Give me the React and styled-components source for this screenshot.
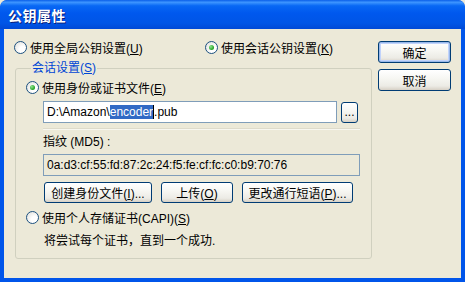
import React from 'react'
import styled, { createGlobalStyle, css } from 'styled-components'

const Global = createGlobalStyle`
  html, body { margin: 0; padding: 0; background: #ece9d8; }
  body { font-family: "Liberation Sans", "Noto Sans CJK SC", sans-serif; font-size: 12px; color: #000; }
`

const Window = styled.div`
  width: 465px;
  height: 282px;
  box-sizing: border-box;
  background: #0055ea;
  border-radius: 7px 7px 0 0;
  display: flex;
  flex-direction: column;
  padding: 0 4px 4px 4px;
  overflow: hidden;
`

const TitleBar = styled.div`
  height: 29px;
  margin: 0 -4px;
  padding-left: 8px;
  display: flex;
  align-items: center;
  background: linear-gradient(#0a5fe9 0%, #3d95ff 8%, #0868f4 20%, #0058ee 45%, #0055e6 80%, #0049d6 100%);
  border-radius: 7px 7px 0 0;
`

const Title = styled.span`
  color: #fff;
  font-weight: bold;
  font-size: 14px;
  letter-spacing: 0.5px;
  text-shadow: 1px 1px 0 #0a1e7a;
`

const Body = styled.div`
  flex: 1;
  background: #ece9d8;
  display: flex;
  padding: 9px 0 0 10px;
`

const LeftCol = styled.div`
  width: 358px;
  display: flex;
  flex-direction: column;
`

const RightCol = styled.div`
  margin-left: 6px;
  padding-top: 3px;
  display: flex;
  flex-direction: column;
  gap: 6px;
`

const Row = styled.div`
  display: flex;
  align-items: center;
  height: ${p => p.$h || 18}px;
  margin-top: ${p => p.$mt || 0}px;
  padding-left: ${p => p.$indent || 0}px;
  gap: ${p => p.$gap || 0}px;
`

const RadioLabel = styled.label`
  display: flex;
  align-items: center;
  gap: 3px;
  width: ${p => p.$w ? p.$w + 'px' : 'auto'};
  white-space: nowrap;
`

const Circle = styled.span`
  width: 13px;
  height: 13px;
  box-sizing: border-box;
  border-radius: 50%;
  border: 1px solid #1c5180;
  background: radial-gradient(circle at 70% 70%, #ffffff 30%, #dcdcd7 100%);
  display: flex;
  align-items: center;
  justify-content: center;
  ${p => p.$on && css`
    &::after {
      content: '';
      width: 5px;
      height: 5px;
      border-radius: 50%;
      background: radial-gradient(circle at 35% 35%, #8fe48f, #21a121 70%);
    }
  `}
`

const Fieldset = styled.fieldset`
  margin: 4px 0 0 1px;
  width: 357px;
  box-sizing: border-box;
  border: 1px solid #d0d0bf;
  border-radius: 3px;
  padding: 2px 10px 11px 10px;
  display: flex;
  flex-direction: column;
`

const Legend = styled.legend`
  color: #0046d5;
  padding: 0 1px;
  margin-left: 5px;
  line-height: 16px;
`

const Indented = styled.div`
  padding-left: 17px;
  display: flex;
  flex-direction: column;
`

const TextBox = styled.div`
  height: 22px;
  box-sizing: border-box;
  border: 1px solid #7f9db9;
  background: ${p => (p.$readOnly ? '#ece9d8' : '#fff')};
  width: ${p => p.$w}px;
  display: flex;
  align-items: center;
  padding-left: 3px;
  white-space: nowrap;
`

const Sel = styled.span`
  background: #316ac5;
  color: #fff;
`

const Caret = styled.span`
  display: inline-block;
  width: 1px;
  height: 14px;
  background: #000;
  vertical-align: middle;
`

const Separator = styled.div`
  height: 1px;
  margin-top: 5px;
  width: 317px;
  background: #dedbcb;
  border-bottom: 1px solid #f8f7f0;
`

const Button = styled.button`
  font: inherit;
  color: #000;
  height: ${p => p.$h || 21}px;
  width: ${p => p.$w}px;
  box-sizing: border-box;
  padding: 0;
  border: 1px solid #003c74;
  border-radius: 3px;
  background: linear-gradient(#ffffff 0%, #f7f7f3 40%, #ecebe5 80%, #d6d0c5 100%);
  white-space: nowrap;
  ${p => p.$default && css`
    box-shadow: inset 0 0 0 1px #98b8ea, inset 0 0 0 2px #c1d3fb;
  `}
`

const Hint = styled.div`
  height: 16px;
  display: flex;
  align-items: center;
  margin-top: 5px;
  padding-left: 18px;
`

function Radio({ on, children, w }) {
  return (
    <RadioLabel $w={w}>
      <Circle $on={on} />
      <span>{children}</span>
    </RadioLabel>
  )
}

export default function App() {
  return (
    <>
      <Global />
      <Window>
        <TitleBar>
          <Title>公钥属性</Title>
        </TitleBar>
        <Body>
          <LeftCol>
            <Row>
              <Radio w={191}>使用全局公钥设置(<u>U</u>)</Radio>
              <Radio on>使用会话公钥设置(<u>K</u>)</Radio>
            </Row>
            <Fieldset>
              <Legend>会话设置(<u>S</u>)</Legend>
              <Row>
                <Radio on>使用身份或证书文件(<u>E</u>)</Radio>
              </Row>
              <Indented>
                <Row $h={22} $mt={5} $gap={4}>
                  <TextBox $w={294}>
                    D:\Amazon\<Sel>encoder</Sel><Caret />.pub
                  </TextBox>
                  <Button $w={17} $h={21}>...</Button>
                </Row>
                <Separator />
                <Row $h={16} $mt={2}>指纹 (MD5) :</Row>
                <Row $h={22} $mt={6}>
                  <TextBox $w={317} $readOnly>
                    0a:d3:cf:55:fd:87:2c:24:f5:fe:cf:fc:c0:b9:70:76
                  </TextBox>
                </Row>
                <Row $h={21} $mt={6} $gap={9} $indent={1}>
                  <Button $w={108}>创建身份文件(<u>I</u>)...</Button>
                  <Button $w={72}>上传(<u>O</u>)</Button>
                  <Button $w={111}>更改通行短语(<u>P</u>)...</Button>
                </Row>
              </Indented>
              <Row $mt={5}>
                <Radio>使用个人存储证书(CAPI)(<u>S</u>)</Radio>
              </Row>
              <Hint>将尝试每个证书，直到一个成功.</Hint>
            </Fieldset>
          </LeftCol>
          <RightCol>
            <Button $w={73} $h={22} $default>确定</Button>
            <Button $w={73} $h={22}>取消</Button>
          </RightCol>
        </Body>
      </Window>
    </>
  )
}
